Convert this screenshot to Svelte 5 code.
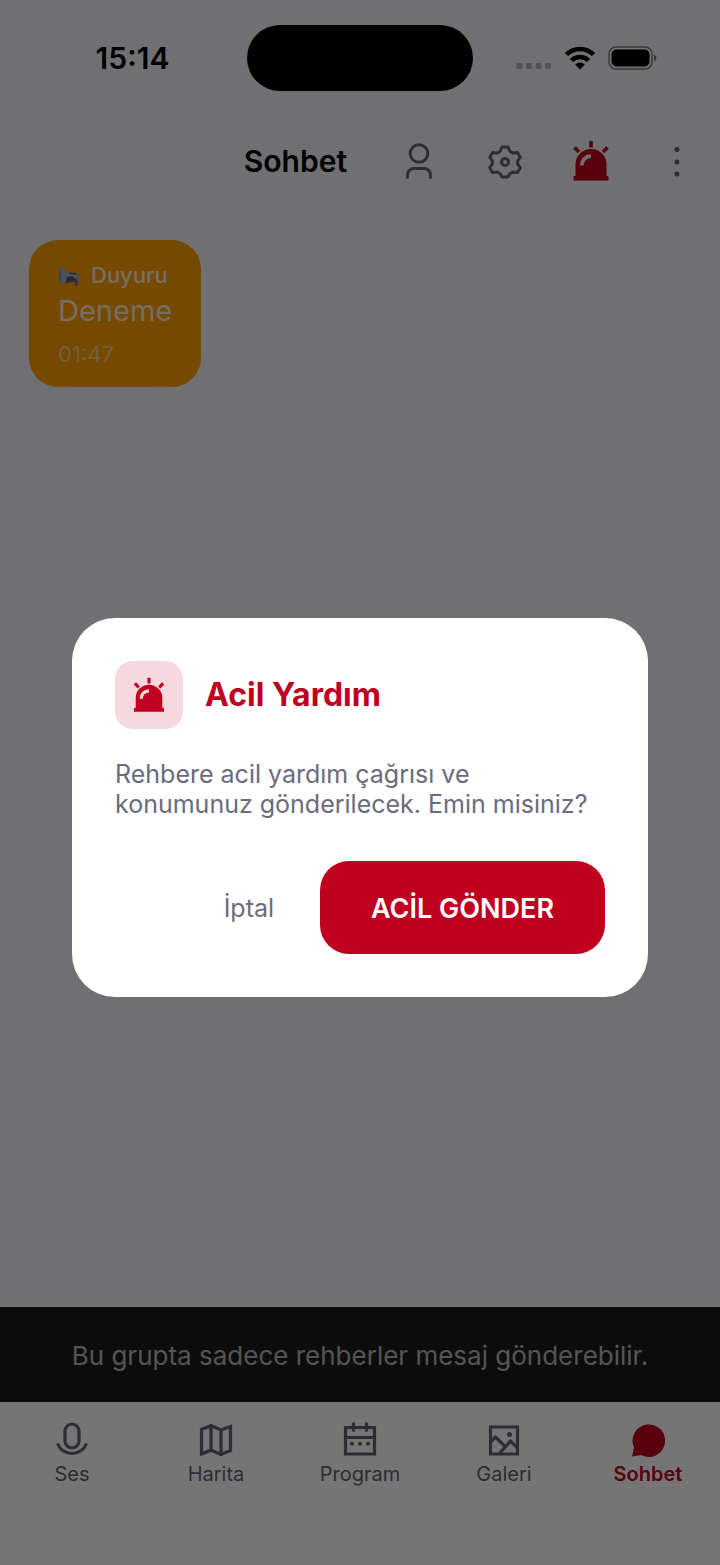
<script>
  const tabs = [
    { id: 'ses', label: 'Ses' },
    { id: 'harita', label: 'Harita' },
    { id: 'program', label: 'Program' },
    { id: 'galeri', label: 'Galeri' },
    { id: 'sohbet', label: 'Sohbet' }
  ];
  let active = $state('sohbet');
</script>

{#snippet alarm(size)}
  <svg width={size} height={size} viewBox="0 0 42 42" aria-hidden="true">
    <path d="M21 1v6.500M4.500 7.500l4.500 4.500M37.500 7.500L33 12" fill="none" stroke="currentColor" stroke-width="3.600" />
    <path fill="currentColor" fill-rule="evenodd" d="M5.500 36V24.500a15.500 15.500 0 0 1 31 0V36h1a1 1 0 0 1 1 1v3.500h-35V37a1 1 0 0 1 1-1zM10 25.500h3.600a7.400 7.400 0 0 1 7.400-7.500v-3.800a11 11 0 0 0-11 11.300z" />
  </svg>
{/snippet}

<div class="app">
  <div class="status">
    <span class="clock">15:14</span>
    <span class="island"></span>
    <span class="signals">
      <svg width="36" height="8" viewBox="0 0 36 8" fill="#000" opacity="0.25" aria-hidden="true">
        <rect x="0.500" y="1" width="6" height="6" rx="1" /><rect x="10" y="1" width="6" height="6" rx="1" />
        <rect x="19.500" y="1" width="6" height="6" rx="1" /><rect x="29" y="1" width="6" height="6" rx="1" />
      </svg>
      <svg width="30" height="24" viewBox="0 0 30 24" aria-hidden="true">
        <g fill="none" stroke="#000" stroke-width="4.500">
          <path d="M1.500 8.500a19.500 19.500 0 0 1 27 0" /><path d="M6.500 14.500a12 12 0 0 1 17 0" />
        </g>
        <path d="M10.200 18.500a7 7 0 0 1 9.600 0L15 23.500z" fill="#000" />
      </svg>
      <svg width="49" height="24" viewBox="0 0 49 24" aria-hidden="true">
        <rect x="1" y="1" width="43" height="22" rx="7" fill="none" stroke="#000" stroke-width="1.500" opacity="0.500" />
        <rect x="3.500" y="3.500" width="38" height="17" rx="5" />
        <path d="M46 8.500q2.500 1 2.500 3.500t-2.500 3.500z" opacity="0.500" />
      </svg>
    </span>
  </div>

  <header class="bar">
    <h1>Sohbet</h1>
    <div class="actions">
      <button aria-label="Profil">
        <svg width="42" height="42" viewBox="0 0 42 42" fill="none" stroke="currentColor" stroke-width="3" aria-hidden="true">
          <circle cx="21" cy="13.500" r="8.800" />
          <path d="M9.500 38.500V35a6.500 6.500 0 0 1 6.500-6.500h10a6.500 6.500 0 0 1 6.500 6.500v3.500" />
        </svg>
      </button>
      <button aria-label="Ayarlar">
        <svg width="42" height="42" viewBox="0 0 42 42" fill="none" stroke="currentColor" stroke-width="3" stroke-linejoin="round" aria-hidden="true">
          <path d="M18 7h6l1.800 4.200 3.200 1.900 4.500-.6 2.800 4.900-2.600 3.200v3.800l2.600 3.200-2.800 4.900-4.500-.6-3.200 1.900L24 37h-6l-1.800-3.200-3.200-1.900-4.500.6-2.800-4.900 2.600-3.200v-3.800l-2.600-3.200 2.800-4.900 4.500.6 3.200-1.900z" />
          <circle cx="21" cy="22" r="3.500" />
        </svg>
      </button>
      <button class="danger" aria-label="Acil yardım">{@render alarm(42)}</button>
      <button aria-label="Menü">
        <svg width="42" height="42" viewBox="0 0 42 42" fill="currentColor" aria-hidden="true">
          <circle cx="21" cy="9.500" r="2.500" /><circle cx="21" cy="22" r="2.500" /><circle cx="21" cy="34" r="2.500" />
        </svg>
      </button>
    </div>
  </header>

  <main>
    <article class="notice">
      <div class="kind">
        <svg width="23" height="22" viewBox="0 0 23 22" aria-hidden="true">
          <path d="M15 10l5 1v9l-3 1-1-6z" fill="#8a6b68" />
          <path d="M5 7l15 1v8l-4 1-11 1z" fill="#596980" />
          <path d="M7 9l12 1v3L7 12z" fill="#b4c0ca" />
          <path d="M2 2q8 4 12 9-5 6-12 9-2-9 0-18z" fill="#a6b0ba" />
          <path d="M2 2q3 9 0 18-2-9 0-18z" fill="#7e98b0" />
          <path d="M9 12l6-1 1 4-8 2z" fill="#4a5872" />
          <path d="M18 8h3l1 5-2 3-2-2z" fill="#9da6af" />
        </svg>
        <span>Duyuru</span>
      </div>
      <p>Deneme</p>
      <time>01:47</time>
    </article>
  </main>

  <div class="banner">Bu grupta sadece rehberler mesaj gönderebilir.</div>

  <nav>
    {#each tabs as tab}
      <button class:active={active === tab.id} onclick={() => (active = tab.id)}>
        <svg width="38" height="38" viewBox="0 0 38 38" fill="none" stroke="currentColor" stroke-width="3.200" aria-hidden="true">
          {#if tab.id === 'ses'}
            <rect x="12" y="3" width="14" height="24" rx="7" />
            <path d="M4.500 22.500a15.500 15.500 0 0 0 29 0" />
          {:else if tab.id === 'harita'}
            <path d="M4.500 8.500L14 4.500l10 4.500 9.500-3.500v24L24 33.500 14 29 4.500 33z M14 4.500v25M24 8.500v25" />
          {:else if tab.id === 'program'}
            <path d="M4.500 6.500h29v26.500h-29zM4.500 16.500h29M12.500 1.500v9M25.500 1.500v9" />
            <g fill="currentColor" stroke="none">
              <circle cx="11" cy="22.800" r="2" /><circle cx="19" cy="22.800" r="2" /><circle cx="27" cy="22.800" r="2" />
            </g>
          {:else if tab.id === 'galeri'}
            <path d="M5.500 6h27v27h-27zM6 20.500l4.500-4.500 10 10M14.500 32.500L25.500 20l7 7" />
            <circle cx="24.500" cy="13.500" r="2.500" fill="currentColor" stroke="none" />
          {:else}
            <path d="M3 35.500L5 26.500A16.300 16.300 0 1 1 12 34z" fill="currentColor" stroke="none" />
          {/if}
        </svg>
        <span>{tab.label}</span>
      </button>
    {/each}
  </nav>

  <div class="scrim">
    <div class="dialog" role="alertdialog" aria-modal="true" aria-labelledby="dialog-title" aria-describedby="dialog-text">
      <div class="heading">
        <span class="badge">{@render alarm(36)}</span>
        <h2 id="dialog-title">Acil Yardım</h2>
      </div>
      <p id="dialog-text">Rehbere acil yardım çağrısı ve konumunuz gönderilecek. Emin misiniz?</p>
      <div class="choices">
        <button class="cancel">İptal</button>
        <button class="send">ACİL GÖNDER</button>
      </div>
    </div>
  </div>
</div>

<style>
  :global(body) { margin: 0; }
  .app {
    position: relative;
    display: flex;
    flex-direction: column;
    min-height: 100vh;
    background: #f5f5f9;
    color: #000;
    font-family: Inter, "Liberation Sans", sans-serif;
  }
  h1, h2, p { margin: 0; }
  button {
    border: 0;
    padding: 0;
    background: none;
    color: inherit;
    font: inherit;
    cursor: pointer;
  }
  svg { display: block; flex: none; }
  .status {
    display: grid;
    grid-template-columns: 1fr 226px 1fr;
    align-items: center;
    height: 116px;
  }
  .clock {
    padding-left: 18px;
    text-align: center;
    font-size: 30px;
    font-weight: 600;
  }
  .island {
    height: 66px;
    border-radius: 33px;
    background: #000;
    z-index: 2;
  }
  .signals {
    display: flex;
    align-items: center;
    justify-content: flex-end;
    gap: 13px;
    padding-right: 63px;
  }
  .signals svg:first-child { margin-top: 16px; }
  .bar {
    display: flex;
    align-items: center;
    justify-content: flex-end;
    gap: 29px;
    height: 90px;
  }
  h1 { font-size: 30px; line-height: 36px; font-weight: 600; }
  .actions { display: flex; color: #626270; }
  .actions button {
    display: grid;
    place-items: center;
    width: 86px;
    height: 86px;
  }
  .actions .danger { color: #bf001f; }
  main {
    flex: 1;
    display: flex;
    align-items: flex-start;
    padding: 34px 29px;
  }
  .notice {
    display: flex;
    flex-direction: column;
    align-items: flex-start;
    box-sizing: border-box;
    padding: 21px 29px 19px;
    border-radius: 29px;
    background: #ffa000;
    color: #fff;
  }
  .kind {
    display: flex;
    align-items: center;
    gap: 10px;
    font-size: 22px;
    line-height: 29px;
    font-weight: 500;
    color: #ffffffdd;
  }
  .notice p { font-size: 29px; line-height: 41px; color: #ffffffdd; }
  .notice time {
    margin-top: 9px;
    font-size: 22px;
    line-height: 28px;
    color: #ffffff80;
  }
  .banner {
    padding: 30px 29px 28px;
    background: #1c1c1c;
    color: #ffffffb3;
    text-align: center;
    font-size: 26px;
    line-height: 37px;
  }
  nav {
    display: grid;
    grid-template-columns: repeat(5, 1fr);
    align-items: start;
    height: 144px;
    padding-top: 19px;
    background: #fff;
    color: #626270;
  }
  nav button {
    display: flex;
    flex-direction: column;
    align-items: center;
    font-size: 20px;
    line-height: 30px;
  }
  nav .active { color: #bf001f; font-weight: 600; }
  .scrim {
    position: absolute;
    inset: 0;
    z-index: 1;
    display: flex;
    align-items: center;
    padding: 118px 72px 69px;
    background: rgba(0, 0, 0, 0.54);
  }
  .dialog {
    flex: 1;
    padding: 43px;
    border-radius: 43px;
    background: #fff;
  }
  .heading {
    display: flex;
    align-items: center;
    gap: 22px;
    color: #bf001f;
  }
  .badge {
    display: grid;
    place-items: center;
    width: 68px;
    height: 68px;
    border-radius: 18px;
    background: #f5d9df;
  }
  h2 { font-size: 32px; font-weight: 700; }
  .dialog p {
    margin: 30px 0 42px;
    color: #6b6b7b;
    font-size: 25px;
    line-height: 30px;
  }
  .choices {
    display: flex;
    align-items: center;
    justify-content: flex-end;
    gap: 18px;
  }
  .cancel {
    padding: 30px 28px 28px;
    color: #6b6b7b;
    font-size: 25px;
  }
  .send {
    padding: 31px 51px 29px;
    border-radius: 29px;
    background: #bf001f;
    color: #fff;
    font-size: 27px;
    line-height: 33px;
    font-weight: 600;
  }
</style>
